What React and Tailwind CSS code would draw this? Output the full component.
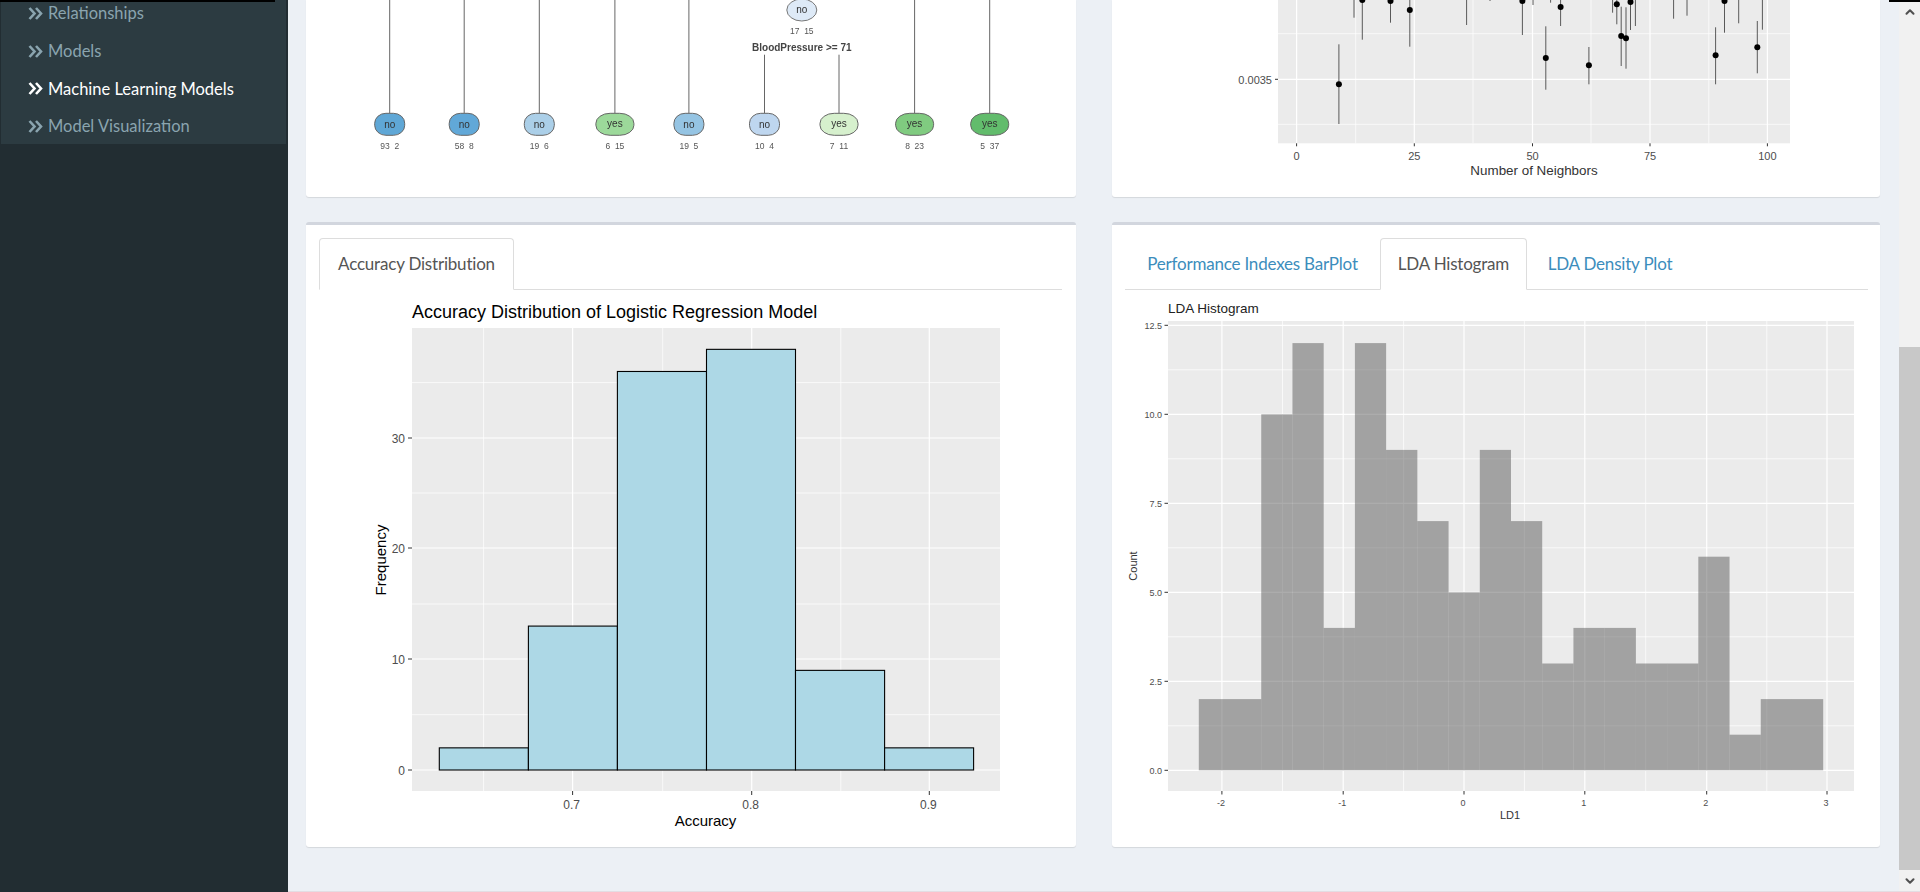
import React from "react";
import { ChevronUp, ChevronDown } from "lucide-react";

const sideItems = [
  { label: "Relationships" },
  { label: "Models" },
  { label: "Machine Learning Models", active: true },
  { label: "Model Visualization" },
];

const leaves = [
  { x: 389.7, rx: 15, fill: "#5fa7d6", text: "no", sub: "93  2" },
  { x: 464.2, rx: 15, fill: "#61a8d8", text: "no", sub: "58  8" },
  { x: 539.3, rx: 15, fill: "#abcfe8", text: "no", sub: "19  6" },
  { x: 614.9, rx: 19, fill: "#9cd99a", text: "yes", sub: "6  15" },
  { x: 688.9, rx: 15, fill: "#95c4e3", text: "no", sub: "19  5" },
  { x: 764.5, rx: 15, fill: "#bed6ef", text: "no", sub: "10  4" },
  { x: 839, rx: 19, fill: "#d6f0cd", text: "yes", sub: "7  11" },
  { x: 914.6, rx: 19, fill: "#80cb80", text: "yes", sub: "8  23" },
  { x: 989.7, rx: 19, fill: "#62bc6c", text: "yes", sub: "5  37" },
];

// x, top of error bar, bottom of error bar, dot y (null = dot is scrolled off)
const knnPoints = [
  [1338.9, 44.3, 124, 84.3],
  [1354, 0, 17.7, null],
  [1362.3, 0, 39.7, 0],
  [1390.5, 0, 22.7, 1],
  [1409.8, 0, 46.7, 10],
  [1466.6, 0, 25, null],
  [1490, 0, 1, null],
  [1522.4, 0, 35, 1],
  [1533, 0, 5, null],
  [1545.8, 26.3, 89.7, 58],
  [1550.6, 0, 2.7, null],
  [1560.6, 0, 26, 7],
  [1588.9, 47, 84.3, 65.3],
  [1612.6, 0, 12.7, null],
  [1616.8, 0, 24.3, 4.3],
  [1621.2, 6.7, 66, 36],
  [1626, 7.3, 68.7, 38.3],
  [1630.5, 0, 30, 2],
  [1635.4, 0, 26, null],
  [1673.6, 0, 18.7, null],
  [1687, 0, 15.7, null],
  [1715.6, 27.3, 84.3, 55.3],
  [1724.5, 0, 32.7, 1],
  [1738.7, 0, 23.3, null],
  [1757.3, 21, 73.3, 47.3],
  [1762.4, 0, 29.7, null],
];

const accCounts = [2, 13, 36, 38, 9, 2];
const ldaCounts = [2, 2, 10, 12, 4, 12, 9, 7, 5, 9, 7, 3, 4, 4, 3, 3, 6, 1, 2, 2];

function DoubleAngle() {
  return (
    <svg width="15" height="13" viewBox="0 0 15 13" className="shrink-0" fill="none" stroke="currentColor" strokeWidth="2.6">
      <polyline points="1.5,1 6.5,6.5 1.5,12" />
      <polyline points="8,1 13,6.5 8,12" />
    </svg>
  );
}

function TreePlot() {
  return (
    <svg width="770" height="197" viewBox="306 0 770 197" className="block blur-[0.3px]" fontFamily="Liberation Sans, sans-serif">
      {leaves.map((n) => (
        <line key={n.x} x1={n.x} x2={n.x} y1={n.x === 764.5 || n.x === 839 ? 54.7 : 0} y2="113" stroke="#666" strokeWidth="1" />
      ))}
      {leaves.map((n) => (
        <g key={n.sub}>
          <rect x={n.x - n.rx} y="113.3" width={n.rx * 2} height="22" rx={n.rx * 0.75} ry="10" fill={n.fill} stroke="#666" strokeWidth="1" />
          <text x={n.x} y={n.text === "yes" ? 126.5 : 127.5} textAnchor="middle" fontSize="10" fill="#333">{n.text}</text>
          <text x={n.x} y="148.5" textAnchor="middle" fontSize="8.5" fill="#555" xmlSpace="preserve">{n.sub}</text>
        </g>
      ))}
      <ellipse cx="801.8" cy="10" rx="15" ry="11" fill="#deeaf7" stroke="#777" strokeWidth="1" />
      <text x="801.8" y="13" textAnchor="middle" fontSize="10" fill="#333">no</text>
      <text x="801.8" y="34" textAnchor="middle" fontSize="8.5" fill="#555" xmlSpace="preserve">17  15</text>
      <text x="801.8" y="50.5" textAnchor="middle" fontSize="10" fontWeight="bold" fill="#444">BloodPressure &gt;= 71</text>
    </svg>
  );
}

function KnnPlot() {
  const majorX = [[1296.6, "0"], [1414.3, "25"], [1532.5, "50"], [1650, "75"], [1767.4, "100"]];
  const minorX = [1355.7, 1473, 1591, 1708.8];
  return (
    <svg width="768" height="197" viewBox="1112 0 768 197" className="block" fontFamily="Liberation Sans, sans-serif">
      <rect x="1278" y="0" width="512" height="143.3" fill="#ebebeb" />
      {[33.7, 124.3].map((y) => <line key={y} x1="1278" x2="1790" y1={y} y2={y} stroke="#fff" strokeWidth="0.7" />)}
      <line x1="1278" x2="1790" y1="79.3" y2="79.3" stroke="#fff" strokeWidth="1.2" />
      {minorX.map((x) => <line key={x} x1={x} x2={x} y1="0" y2="143.3" stroke="#fff" strokeWidth="0.7" />)}
      {majorX.map(([x]) => <line key={x} x1={x} x2={x} y1="0" y2="143.3" stroke="#fff" strokeWidth="1.2" />)}
      {knnPoints.map(([x, top, bottom, dot]) => (
        <g key={x}>
          <line x1={x} x2={x} y1={top} y2={bottom} stroke="#333" strokeWidth="0.8" />
          {dot !== null && <circle cx={x} cy={dot} r="3" fill="#000" />}
        </g>
      ))}
      <line x1="1275" x2="1278" y1="79.3" y2="79.3" stroke="#333" />
      {majorX.map(([x]) => <line key={x} x1={x} x2={x} y1="143.3" y2="146.3" stroke="#333" />)}
      <text x="1272" y="84" textAnchor="end" fontSize="11" fill="#4d4d4d">0.0035</text>
      {majorX.map(([x, t]) => <text key={t} x={x} y="160" textAnchor="middle" fontSize="11" fill="#4d4d4d">{t}</text>)}
      <text x="1534" y="174.5" textAnchor="middle" fontSize="13.4" fill="#333">Number of Neighbors</text>
    </svg>
  );
}

function AccuracyPlot() {
  const base = 770;
  const perCount = 11.07;
  const edges = [439.3, 528.4, 617.4, 706.5, 795.5, 884.6, 973.6];
  return (
    <svg width="770" height="557" viewBox="306 290 770 557" className="block" fontFamily="Liberation Sans, sans-serif">
      <text x="412" y="318" fontSize="18" fill="#000">Accuracy Distribution of Logistic Regression Model</text>
      <rect x="412" y="328" width="588" height="463" fill="#ebebeb" />
      {[714.7, 604, 493, 382.6].map((y) => <line key={y} x1="412" x2="1000" y1={y} y2={y} stroke="#fff" strokeWidth="0.7" />)}
      {[770, 659, 548, 438].map((y) => <line key={y} x1="412" x2="1000" y1={y} y2={y} stroke="#fff" strokeWidth="1.2" />)}
      {[483.6, 662.7, 840.8].map((x) => <line key={x} x1={x} x2={x} y1="328" y2="791" stroke="#fff" strokeWidth="0.7" />)}
      {[572.6, 751.7, 929.3].map((x) => <line key={x} x1={x} x2={x} y1="328" y2="791" stroke="#fff" strokeWidth="1.2" />)}
      {accCounts.map((c, i) => (
        <rect key={i} x={edges[i]} y={base - c * perCount} width={edges[i + 1] - edges[i]} height={c * perCount} fill="#add8e6" stroke="#000" strokeWidth="1.1" />
      ))}
      {[[770, "0"], [659, "10"], [548, "20"], [438, "30"]].map(([y, t]) => (
        <g key={t}>
          <line x1="408" x2="412" y1={y} y2={y} stroke="#333" />
          <text x="405" y={y + 4.5} textAnchor="end" fontSize="12" fill="#4d4d4d">{t}</text>
        </g>
      ))}
      {[[572.6, "0.7"], [751.7, "0.8"], [929.3, "0.9"]].map(([x, t]) => (
        <g key={t}>
          <line x1={x} x2={x} y1="791" y2="795" stroke="#333" />
          <text x={x - 1} y="808.5" textAnchor="middle" fontSize="12" fill="#4d4d4d">{t}</text>
        </g>
      ))}
      <text x="705.5" y="826" textAnchor="middle" fontSize="15" fill="#000">Accuracy</text>
      <text transform="translate(386 560) rotate(-90)" textAnchor="middle" fontSize="15" fill="#000">Frequency</text>
    </svg>
  );
}

function LdaPlot() {
  const base = 770.3;
  const perCount = 35.6;
  const start = 1198.8;
  const bin = 31.22;
  const xTicks = [[1221.9, "-2"], [1343.2, "-1"], [1464, "0"], [1584.8, "1"], [1706.7, "2"], [1827, "3"]];
  const yTicks = [[770.3, "0.0"], [681.3, "2.5"], [592.3, "5.0"], [503.3, "7.5"], [414.3, "10.0"], [325.3, "12.5"]];
  const minorX = [1282.5, 1403.6, 1524.4, 1645.7, 1766.8];
  const minorY = [725.8, 636.8, 547.8, 458.8, 369.8];
  return (
    <svg width="768" height="557" viewBox="1112 290 768 557" className="block" fontFamily="Liberation Sans, sans-serif">
      <text x="1168" y="313" fontSize="13.5" fill="#222">LDA Histogram</text>
      <rect x="1168" y="321" width="686" height="470" fill="#ebebeb" />
      {minorY.map((y) => <line key={y} x1="1168" x2="1854" y1={y} y2={y} stroke="#fff" strokeWidth="0.7" />)}
      {yTicks.map(([y]) => <line key={y} x1="1168" x2="1854" y1={y} y2={y} stroke="#fff" strokeWidth="1.2" />)}
      {minorX.map((x) => <line key={x} x1={x} x2={x} y1="321" y2="791" stroke="#fff" strokeWidth="0.7" />)}
      {xTicks.map(([x]) => <line key={x} x1={x} x2={x} y1="321" y2="791" stroke="#fff" strokeWidth="1.2" />)}
      {ldaCounts.map((c, i) => (
        <rect key={i} x={start + i * bin} y={base - c * perCount} width={bin} height={c * perCount} fill="#595959" fillOpacity="0.5" />
      ))}
      {yTicks.map(([y, t]) => (
        <g key={t}>
          <line x1="1164.5" x2="1168" y1={y} y2={y} stroke="#333" />
          <text x="1162" y={y + 3.5} textAnchor="end" fontSize="9" fill="#4d4d4d">{t}</text>
        </g>
      ))}
      {xTicks.map(([x, t]) => (
        <g key={t}>
          <line x1={x} x2={x} y1="791" y2="794.5" stroke="#333" />
          <text x={x - 1} y="805.5" textAnchor="middle" fontSize="9" fill="#4d4d4d">{t}</text>
        </g>
      ))}
      <text x="1510" y="819" textAnchor="middle" fontSize="11" fill="#333">LD1</text>
      <text transform="translate(1137 566) rotate(-90)" textAnchor="middle" fontSize="11" fill="#333">Count</text>
    </svg>
  );
}

function Tab({ label, active, width }) {
  return (
    <div
      className={
        active
          ? `${width} h-[52px] -mb-px flex items-center justify-center bg-white border border-[#ddd] border-b-white rounded-t-[4px] text-[#555] tracking-[-0.2px]`
          : `${width} h-[52px] -mb-px flex items-center justify-center text-[#3c8dbc] tracking-[-0.2px]`
      }
    >
      {label}
    </div>
  );
}

export default function App() {
  return (
    <div className="relative flex h-screen overflow-hidden bg-[#ecf0f5] font-['Lato',sans-serif] text-[17px]">
      <aside className="w-[288px] shrink-0 bg-[#222d32]">
        <ul className="mx-px w-[285px] h-[144px] overflow-hidden bg-[#2c3b41] text-[16.5px]">
          {sideItems.map((item, i) => (
            <li
              key={item.label}
              className={
                (i === 0 ? "-mt-[5px] " : "") +
                "h-[37.6px] pl-[27px] flex items-center gap-[5px] " +
                (item.active ? "text-white" : "text-[#8aa4af]")
              }
            >
              <DoubleAngle />
              <span>{item.label}</span>
            </li>
          ))}
        </ul>
      </aside>

      <main className="flex-1 pl-[18px]">
        <div className="grid grid-cols-[770px_768px] gap-x-[36px] gap-y-[25px]">
          <div className="h-[197px] bg-white rounded-b-[3px] shadow-[0_1px_1px_rgba(0,0,0,0.1)] overflow-hidden">
            <TreePlot />
          </div>
          <div className="h-[197px] bg-white rounded-b-[3px] shadow-[0_1px_1px_rgba(0,0,0,0.1)] overflow-hidden">
            <KnnPlot />
          </div>

          <div className="h-[625px] bg-white rounded-[3px] border-t-[3px] border-[#d2d6de] shadow-[0_1px_1px_rgba(0,0,0,0.1)] overflow-hidden">
            <div className="mt-[13px] ml-[13px] mr-[14px] h-[52px] flex border-b border-[#ddd]">
              <Tab label="Accuracy Distribution" active width="w-[195px]" />
            </div>
            <AccuracyPlot />
          </div>
          <div className="h-[625px] bg-white rounded-[3px] border-t-[3px] border-[#d2d6de] shadow-[0_1px_1px_rgba(0,0,0,0.1)] overflow-hidden">
            <div className="mt-[13px] ml-[13px] mr-[12px] h-[52px] flex border-b border-[#ddd]">
              <Tab label="Performance Indexes BarPlot" width="w-[255px]" />
              <Tab label="LDA Histogram" active width="w-[147px]" />
              <Tab label="LDA Density Plot" width="w-[166px]" />
            </div>
            <LdaPlot />
          </div>
        </div>
      </main>

      <div className="w-[21px] shrink-0 flex flex-col items-center bg-[#f1f1f1] text-[#505050]">
        <div className="h-[347px] w-full flex justify-center pt-[5px]">
          <ChevronUp size={14} strokeWidth={3.5} />
        </div>
        <div className="h-[523px] w-full bg-[#c8c8c8]" />
        <div className="flex-1 w-full flex items-center justify-center">
          <ChevronDown size={14} strokeWidth={3.5} />
        </div>
      </div>

      {/* slivers of the window above and below the captured area */}
      <div className="absolute top-0 left-0 w-[275px] h-[2px] bg-black" />
      <div className="absolute top-0 left-[1889px] right-0 h-[2px] bg-black" />
      <div className="absolute bottom-0 left-[288px] right-0 h-px bg-[#e3dde3]" />
    </div>
  );
}
